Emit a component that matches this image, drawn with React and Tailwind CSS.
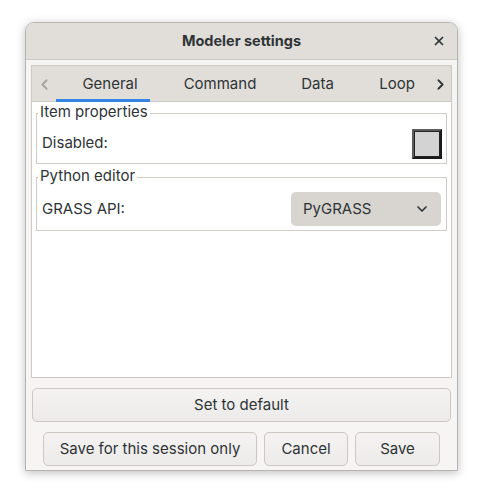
import { ChevronLeft, ChevronRight, ChevronDown, X } from 'lucide-react'

function GroupBox({ title, className = '', children }) {
  return (
    <div className={`relative mx-[4px] border border-[#cfcbc7] ${className}`}>
      <span className="absolute left-[1px] top-[-12px] bg-white px-[2px] text-[15px] leading-[20px] text-[#2e3436]">
        {title}
      </span>
      <div className="flex h-full items-center justify-between pl-[5px] pr-[4px] pt-[10px]">
        {children}
      </div>
    </div>
  )
}

function Button({ className = '', children }) {
  return (
    <button className={`flex items-center justify-center rounded-[5px] border border-[#cdc7c2] bg-gradient-to-b from-[#f4f3f2] to-[#edebe9] text-[15px] text-[#2e3436] ${className}`}>
      {children}
    </button>
  )
}

export default function App() {
  return (
    <div className="h-[500px] w-[483px] bg-white pl-[25px] pt-[22px] font-['Inter',sans-serif]">
      <div className="flex h-[449px] w-[433px] flex-col overflow-hidden rounded-t-[9px] border border-[#b8b4b0] bg-[#f6f5f4] shadow-[0_2px_10px_rgba(0,0,0,0.25)]">
        <div className="relative flex h-[37px] shrink-0 items-center justify-center border-b border-[#cdc8c4] bg-[#e1ded9]">
          <span className="text-[14.5px] font-bold text-[#2e3436]">Modeler settings</span>
          <X size={14} strokeWidth={3} className="absolute right-[11px] text-[#2e3436]" />
        </div>
        <div className="mx-[5px] mt-[5px] flex h-[313px] flex-col border border-[#cdc8c4]">
          <div className="flex h-[36px] shrink-0 items-center border-b border-[#cdc8c4] bg-[#e1ded9] pt-[2px] text-[15px] text-[#2e3436]">
            <div className="flex w-[24px] justify-center">
              <ChevronLeft size={17} strokeWidth={2.5} className="text-[#a4a19e]" />
            </div>
            <div className="relative flex h-full w-[94px] items-center justify-center pl-[14px]">
              General
              <div className="absolute bottom-[-1px] left-0 h-[3px] w-full bg-[#3584e4]" />
            </div>
            <div className="flex h-full w-[140px] items-center justify-center">Command</div>
            <div className="flex h-full w-[55px] items-center justify-center">Data</div>
            <div className="flex h-full w-[84px] items-center justify-center pl-[20px]">Loop</div>
            <div className="flex flex-1 justify-center">
              <ChevronRight size={17} strokeWidth={2.5} className="text-[#2e3436]" />
            </div>
          </div>
          <div className="flex-1 bg-white pt-[11px]">
            <GroupBox title="Item properties" className="h-[51px]">
              <span className="text-[15px] text-[#2e3436]">Disabled:</span>
              <div className="h-[30px] w-[30px] border-[2px] border-t-[#5c5c5c] border-l-[#5c5c5c] border-r-[#1a1a1a] border-b-[#1a1a1a]">
                <div className="h-full w-full border border-[#222] bg-[#d3d3d3]" />
              </div>
            </GroupBox>
            <GroupBox title="Python editor" className="mt-[13px] h-[54px]">
              <span className="text-[15px] text-[#2e3436]">GRASS API:</span>
              <div className="mr-[1px] flex h-[34px] w-[150px] items-center justify-between rounded-[5px] bg-[#d8d4d0] pl-[12px] pr-[11px] text-[15px] text-[#2e3436]">
                PyGRASS
                <ChevronDown size={16} strokeWidth={2.5} />
              </div>
            </GroupBox>
          </div>
        </div>
        <div className="px-[6px] pt-[10px]">
          <Button className="h-[34px] w-full">Set to default</Button>
        </div>
        <div className="flex gap-[7px] pl-[17px] pt-[10px]">
          <Button className="h-[34px] w-[214px]">Save for this session only</Button>
          <Button className="h-[34px] w-[84px]">Cancel</Button>
          <Button className="h-[34px] w-[85px]">Save</Button>
        </div>
      </div>
    </div>
  )
}
